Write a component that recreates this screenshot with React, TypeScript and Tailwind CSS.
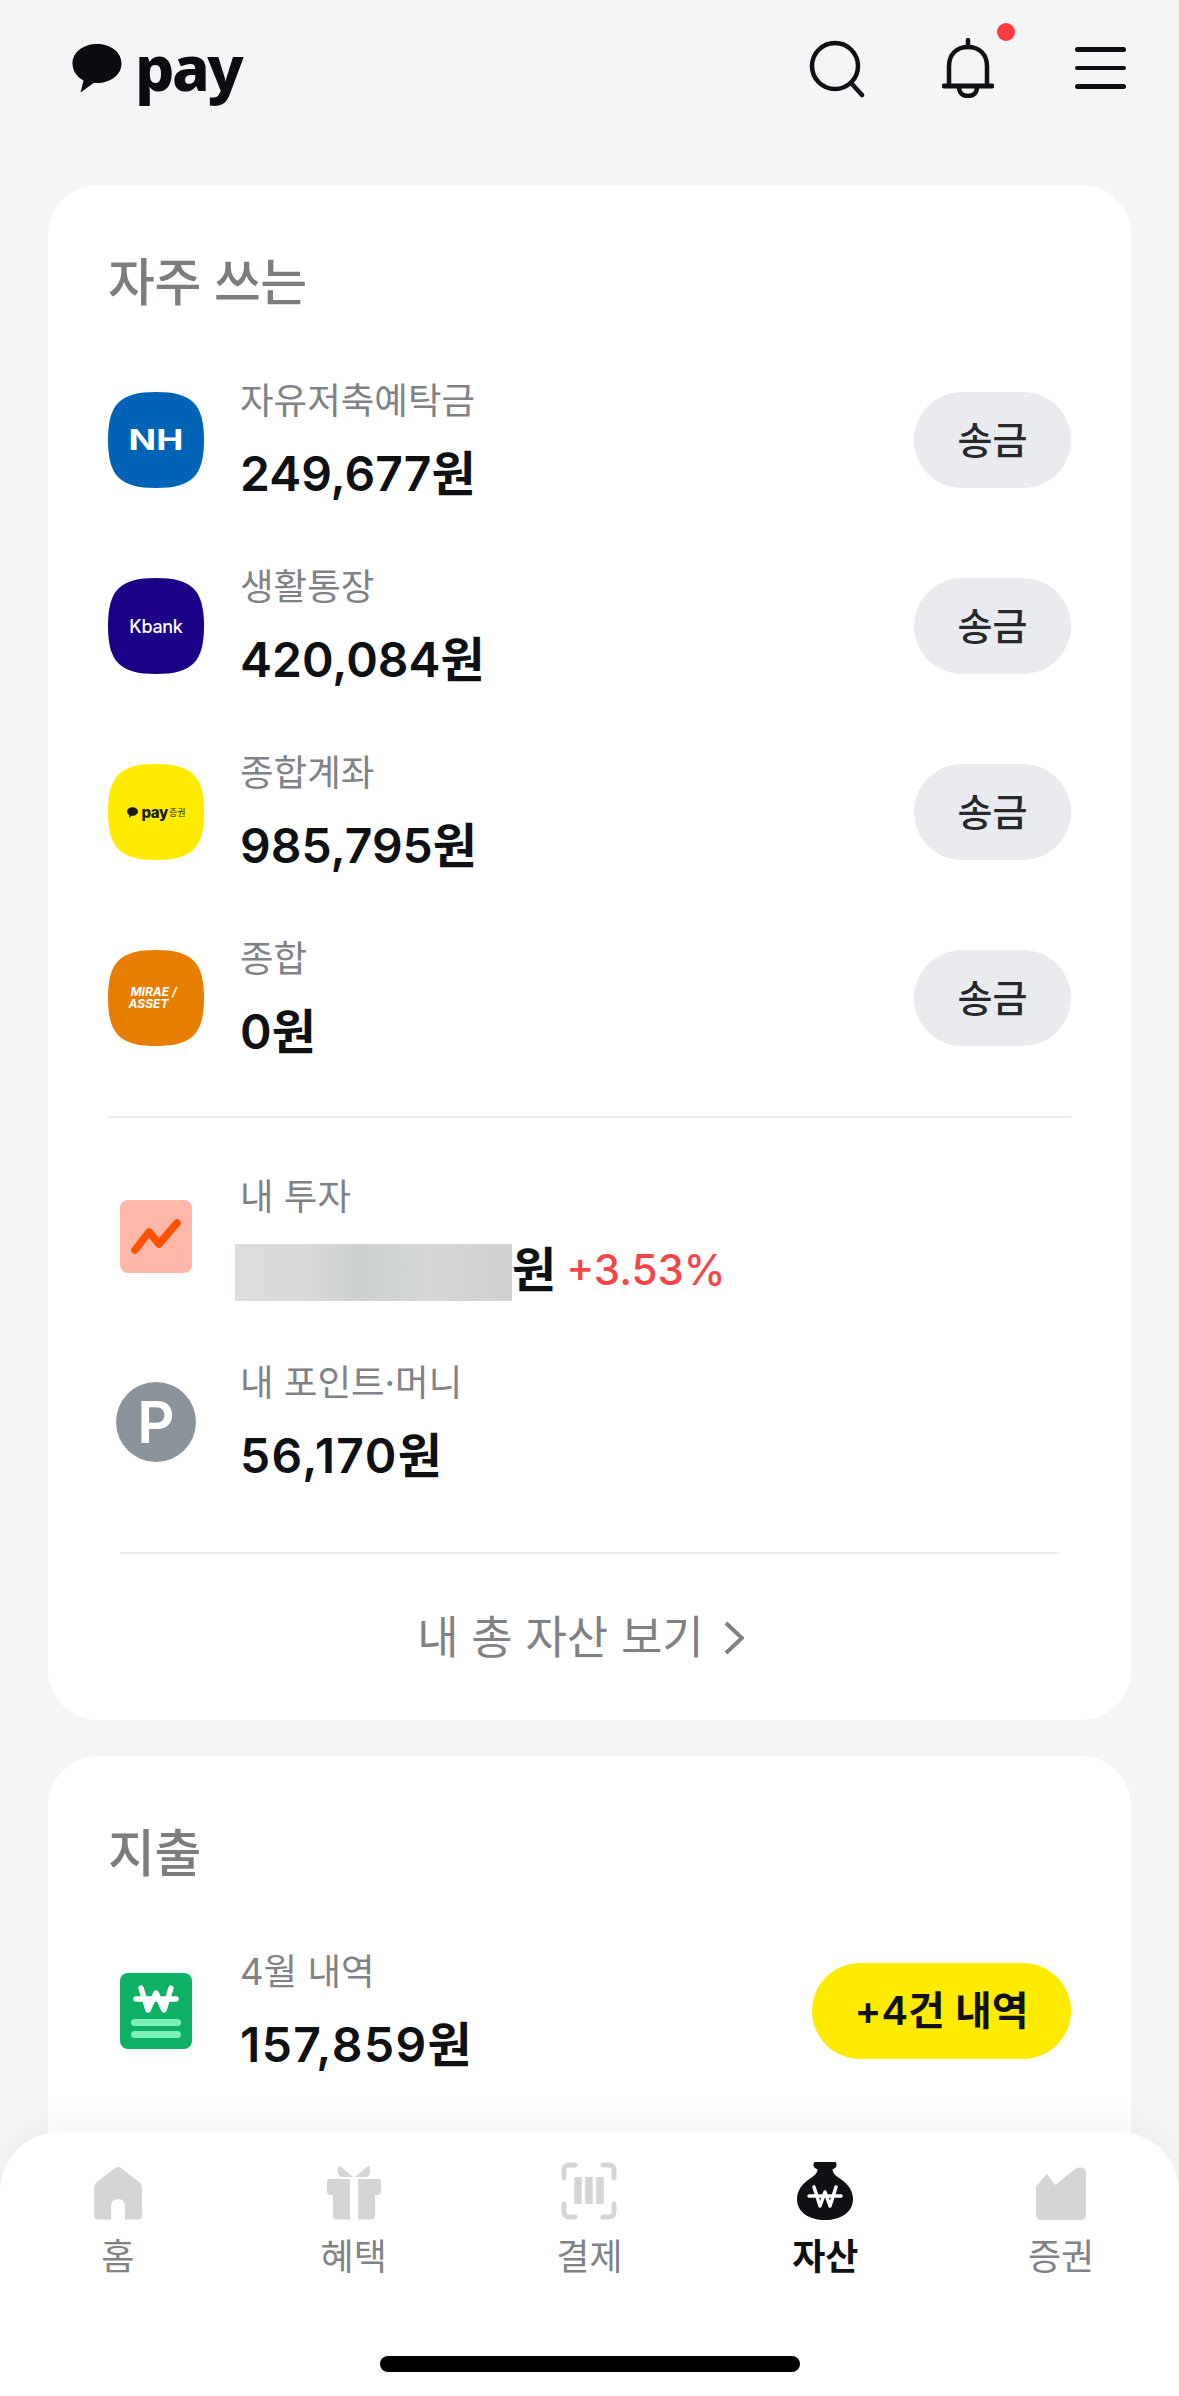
const FONT = "font-['Inter','Noto_Sans_CJK_KR',sans-serif]";
const SQUIRCLE = "[clip-path:path('M48_0C84_0_96_12_96_48C96_84_84_96_48_96C12_96_0_84_0_48C0_12_12_0_48_0Z')]";

const Bubble = ({ className }: { className: string }) => (
  <svg viewBox="0 0 50 50" className={className} fill="currentColor">
    <path d="M25 1C11.5 1 0.5 9 0.5 20.5 0.5 28 5 34 11.5 37.5L8.5 49.5 22 39.7C23 39.8 24 40 25 40 38.5 40 49.5 32 49.5 20.5 49.5 9 38.5 1 25 1Z" />
  </svg>
);

const accounts = [
  { name: "자유저축예탁금", amount: "249,677원", logo: "nh" },
  { name: "생활통장", amount: "420,084원", logo: "kbank" },
  { name: "종합계좌", amount: "985,795원", logo: "pay" },
  { name: "종합", amount: "0원", logo: "mirae" },
];

const BankLogo = ({ logo }: { logo: string }) => {
  if (logo === "nh")
    return (
      <div className={`${SQUIRCLE} w-[96px] h-[96px] bg-[#0063b6] flex items-center justify-center text-white font-bold text-[29px]`}>
        <span className="scale-x-[1.25]">NH</span>
      </div>
    );
  if (logo === "kbank")
    return (
      <div className={`${SQUIRCLE} w-[96px] h-[96px] bg-[#1b0088] flex items-center justify-center text-white font-medium text-[18px] tracking-[-0.3px]`}>
        Kbank
      </div>
    );
  if (logo === "pay")
    return (
      <div className={`${SQUIRCLE} w-[96px] h-[96px] bg-[#ffeb00] flex items-center justify-center text-[#1a1a1a]`}>
        <Bubble className="w-[13px] h-[11px] mr-[2px]" />
        <span className="font-extrabold text-[15px] tracking-[-0.3px] leading-none">pay</span>
        <span className="text-[9px] ml-[1px] leading-none">증권</span>
      </div>
    );
  return (
    <div className={`${SQUIRCLE} w-[96px] h-[96px] bg-[#e87e00] flex flex-col items-center justify-center text-white font-bold italic text-[12px] leading-[12px] pr-[5px]`}>
      <span>MIRAE /</span>
      <span className="pr-[10px]">ASSET</span>
    </div>
  );
};

const Row = ({
  icon,
  label,
  children,
  action,
}: {
  icon: React.ReactNode;
  label: string;
  children: React.ReactNode;
  action?: React.ReactNode;
}) => (
  <div className="flex items-center h-[130px]">
    <div className="w-[96px] flex justify-center shrink-0">{icon}</div>
    <div className="ml-[36px] flex-1 min-w-0">
      <div className="text-[36.5px] leading-[50px] text-[#808285]">{label}</div>
      <div className="mt-[18px] text-[48px] leading-[60px] font-semibold text-[#0e1013] flex items-center">
        {children}
      </div>
    </div>
    {action}
  </div>
);

const SearchIcon = () => (
  <svg width="56" height="58" viewBox="0 0 56 58" fill="none" stroke="#0e1013" strokeWidth="4.5" strokeLinecap="round">
    <circle cx="26" cy="26" r="23" />
    <path d="M43 44L53 55" />
  </svg>
);

const BellIcon = () => (
  <svg width="52" height="60" viewBox="0 0 52 60" fill="none" stroke="#0e1013" strokeWidth="4.5" strokeLinecap="round" strokeLinejoin="round">
    <path d="M26 2V9" />
    <path d="M7 48V28C7 16 15 9 26 9 37 9 45 16 45 28V48" />
    <path d="M2 48H50" strokeWidth="5" />
    <path d="M17 49C17 55 21 58 26 58 31 58 35 55 35 49" />
  </svg>
);

const tabs = [
  { label: "홈", icon: "home" },
  { label: "혜택", icon: "gift" },
  { label: "결제", icon: "scan" },
  { label: "자산", icon: "bag", active: true },
  { label: "증권", icon: "stock" },
];

const TabIcon = ({ name }: { name: string }) => {
  if (name === "home")
    return (
      <svg width="52" height="54" viewBox="0 0 52 54" fill="#d3d5d6">
        <path d="M23 2C24.500 0.500 27.500 0.500 29 2L47 16C49 17.500 50 19.500 50 22V49C50 52 48.500 53.500 46 53.500H33V41C33 36.500 30.500 33 26 33 21.500 33 19 36.500 19 41V53.500H6C3.500 53.500 2 52 2 49V22C2 19.500 3 17.500 5 16Z" />
      </svg>
    );
  if (name === "gift")
    return (
      <svg width="56" height="54" viewBox="0 0 56 54" fill="#d3d5d6">
        <path d="M14 0L27 11H17C14 11 12 9 12 6V2C12 0.500 13 -0.500 14 0Z" />
        <path d="M42 0L29 11H39C42 11 44 9 44 6V2C44 0.500 43 -0.500 42 0Z" />
        <path d="M3 13H24V29H5C2 29 1 27.500 1 25V15C1 13.500 2 13 3 13Z" />
        <path d="M32 13H53C54 13 55 13.500 55 15V25C55 27.500 54 29 51 29H32Z" />
        <path d="M7 29H24V53.500H11C8.500 53.500 7 52 7 49.500Z" />
        <path d="M32 29H49V49.500C49 52 47.500 53.500 45 53.500H32Z" />
      </svg>
    );
  if (name === "scan")
    return (
      <svg width="56" height="58" viewBox="0 0 56 58" fill="none" stroke="#d3d5d6" strokeWidth="5" strokeLinecap="round" strokeLinejoin="round">
        <path d="M14 3H8C5 3 3 5 3 8V16" />
        <path d="M42 3H48C51 3 53 5 53 8V16" />
        <path d="M14 55H8C5 55 3 53 3 50V42" />
        <path d="M42 55H48C51 55 53 53 53 50V42" />
        <path d="M17 15V42M28 15V42M39 15V42" strokeWidth="7.500" strokeLinecap="butt" />
      </svg>
    );
  if (name === "bag")
    return (
      <svg width="58" height="58" viewBox="0 0 58 58">
        <path fill="#0e1013" d="M19 0H39C41 0 41 5 39 6L36.500 7.500C36.500 10 38 12 41 14.500 50 20 57 27 57 37 57 50 45 58 29 58 13 58 1 50 1 37 1 27 8 20 17 14.500 20 12 21.500 10 21.500 7.500L19 6C17 5 17 0 19 0Z" />
        <path fill="none" stroke="#fff" strokeWidth="3.500" strokeLinecap="round" strokeLinejoin="round" d="M18 25L24 44 29 30 34 44 40 25M13 34H45" />
      </svg>
    );
  return (
    <svg width="50" height="53" viewBox="0 0 50 53" fill="#d3d5d6">
      <path d="M0 22C0 20 0.500 19 2 17L11 7 19 18 40 1.500C44 -1 50 1 50 5V48C50 51 48 53 45 53H5C2 53 0 51 0 48Z" />
    </svg>
  );
};

export default function App() {
  return (
    <div className={`${FONT} relative w-[1179px] h-[2396px] overflow-hidden bg-[#f3f5f7]`}>
      {/* header */}
      <header className="h-[185px] pl-[72px] pr-[53px] flex items-start justify-between">
        <div className="flex items-start pt-[43px] text-[#0a0c10]">
          <Bubble className="w-[50px] h-[50px]" />
          <span className="ml-[13px] -mt-[26px] text-[62px] leading-[100px] font-extrabold tracking-[-2.5px] font-['Noto_Sans',sans-serif]">pay</span>
        </div>
        <div className="flex items-start pt-[38px]">
          <div className="mr-[77px] mt-[2px]"><SearchIcon /></div>
          <div className="relative mr-[81px]">
            <BellIcon />
            <span className="absolute -top-[15px] -right-[21px] w-[18px] h-[18px] rounded-full bg-[#fb3d3f]" />
          </div>
          <div className="w-[51px] mt-[9px] flex flex-col gap-[14px]">
            <span className="h-[4.500px] rounded-full bg-[#0e1013]" />
            <span className="h-[4.500px] rounded-full bg-[#0e1013]" />
            <span className="h-[4.500px] rounded-full bg-[#0e1013]" />
          </div>
        </div>
      </header>

      <main className="px-[48px]">
        <section className="bg-white rounded-[50px] h-[1535px] px-[60px] pt-[69px]">
          <h2 className="text-[51px] leading-[58px] font-medium text-[#7b7d80] tracking-[-0.5px]">자주 쓰는</h2>
          <div className="mt-[63px] flex flex-col gap-[56px]">
            {accounts.map((a) => (
              <Row
                key={a.name}
                icon={<BankLogo logo={a.logo} />}
                label={a.name}
                action={
                  <button className="w-[157px] h-[96px] rounded-full bg-[#e9ebee] text-[38px] font-medium text-[#26282b]">
                    송금
                  </button>
                }
              >
                {a.amount}
              </Row>
            ))}
          </div>
          <div className="mt-[53px] h-[2px] bg-[#e9ebed]" />
          <div className="mt-[53px] flex flex-col gap-[56px]">
            <Row
              icon={
                <div className="w-[72px] h-[73px] rounded-[8px] bg-[#ffb8a8] flex items-center justify-center">
                  <svg width="50" height="36" viewBox="0 0 50 36" fill="none" stroke="#ff5000" strokeWidth="7.500" strokeLinecap="round" strokeLinejoin="round">
                    <path d="M4 32L18 14 28 26 46 5" />
                  </svg>
                </div>
              }
              label="내 투자"
            >
              <span className="-ml-[5px] w-[277px] h-[57px] mt-[4px] bg-[linear-gradient(90deg,#dcdddd,#d9dada_25%,#ccd0d0_45%,#d6d8d8_70%,#cfd1d1_100%)]" />
              <span>원</span>
              <span className="ml-[10px] text-[42px] font-medium text-[#f5444a]">+3.53%</span>
            </Row>
            <Row
              icon={
                <div className="w-[80px] h-[80px] rounded-full bg-[#8a929c] flex items-center justify-center text-white text-[58px] font-semibold leading-none">
                  P
                </div>
              }
              label="내 포인트·머니"
            >
              <span className="tracking-[1.4px]">56,170원</span>
            </Row>
          </div>
          <div className="mt-[65px] mx-[12px] h-[2px] bg-[#e9ebed]" />
          <div className="h-[168px] pr-[18px] flex items-center justify-center text-[45px] text-[#7f8184]">
            내 총 자산 보기
            <svg className="ml-[20px]" width="20" height="36" viewBox="0 0 20 36" fill="none" stroke="#7f8184" strokeWidth="4">
              <path d="M2 3L18 18 2 33" />
            </svg>
          </div>
        </section>

        <section className="mt-[36px] bg-white rounded-[50px] h-[640px] px-[60px] pt-[69px]">
          <h2 className="text-[51px] leading-[58px] font-medium text-[#7b7d80] tracking-[-0.5px]">지출</h2>
          <div className="mt-[63px]">
            <Row
              icon={
                <div className="relative w-[72px] h-[76px] rounded-[8px] bg-[#0cb163] flex flex-col items-center pt-[12px]">
                  <svg width="46" height="28" viewBox="0 0 46 28" fill="none" stroke="#fff" strokeWidth="5.500" strokeLinecap="round" strokeLinejoin="round">
                    <path d="M8 3L15 25 23 8 31 25 38 3M3 14H43" />
                  </svg>
                  <span className="mt-[6px] w-[50px] h-[7px] rounded-full bg-[#7df0b4]" />
                  <span className="mt-[5px] w-[50px] h-[7px] rounded-full bg-[#7df0b4]" />
                </div>
              }
              label="4월 내역"
              action={
                <button className="w-[259px] h-[96px] rounded-full bg-[#ffeb00] text-[40px] font-semibold text-[#111]">
                  +4건 내역
                </button>
              }
            >
              <span className="tracking-[1.4px]">157,859원</span>
            </Row>
          </div>
        </section>
      </main>

      {/* bottom tab bar */}
      <nav className="absolute left-0 right-0 bottom-0 h-[264px] bg-white rounded-t-[60px] shadow-[0_-14px_32px_rgba(0,0,0,0.035)]">
        <div className="grid grid-cols-5 pt-[28px]">
          {tabs.map((t) => (
            <div key={t.label} className="flex flex-col items-center">
              <div className="h-[60px] flex items-end justify-center">
                <TabIcon name={t.icon} />
              </div>
              <span className={`mt-[12px] text-[36px] leading-[50px] ${t.active ? "font-semibold text-[#0e1013]" : "text-[#808285]"}`}>
                {t.label}
              </span>
            </div>
          ))}
        </div>
        <div className="absolute left-[380px] bottom-[24px] w-[420px] h-[16px] rounded-full bg-black" />
      </nav>
    </div>
  );
}
